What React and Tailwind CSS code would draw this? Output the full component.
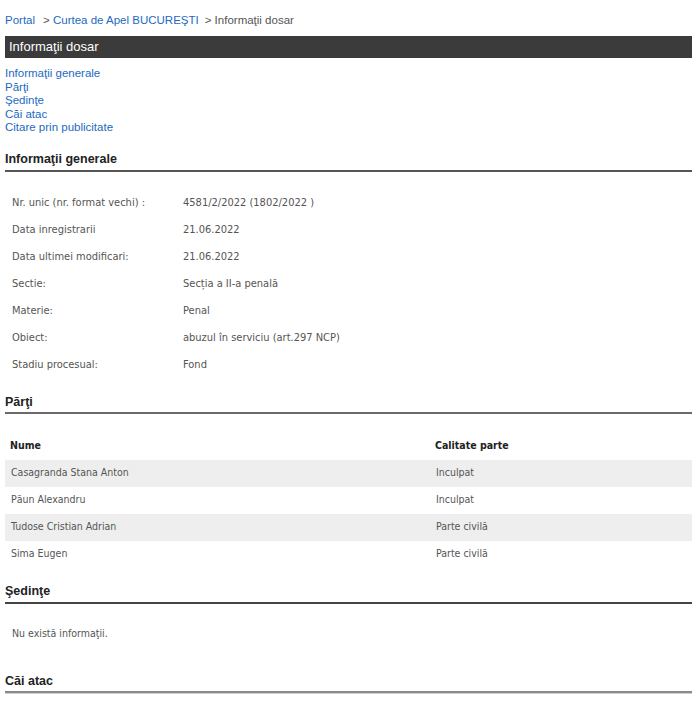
const info = [
  ["Nr. unic (nr. format vechi) :", "4581/2/2022 (1802/2022 )"],
  ["Data inregistrarii", "21.06.2022"],
  ["Data ultimei modificari:", "21.06.2022"],
  ["Sectie:", "Secția a II-a penală"],
  ["Materie:", "Penal"],
  ["Obiect:", "abuzul în serviciu (art.297 NCP)"],
  ["Stadiu procesual:", "Fond"],
];

const parti = [
  ["Casagranda Stana Anton", "Inculpat"],
  ["Păun Alexandru", "Inculpat"],
  ["Tudose Cristian Adrian", "Parte civilă"],
  ["Sima Eugen", "Parte civilă"],
];

const links = [
  "Informaţii generale",
  "Părţi",
  "Şedinţe",
  "Căi atac",
  "Citare prin publicitate",
];

function Heading({ children, className = "" }) {
  return (
    <h2
      className={`border-b-2 text-[12.5px] font-bold leading-[16px] text-[#222] ${className}`}
    >
      {children}
    </h2>
  );
}

export default function App() {
  return (
    <div className="min-h-[705px] w-[700px] bg-white pl-[5px] pr-[8px] font-['Liberation_Sans',Arial,sans-serif]">
      {/* breadcrumb */}
      <div className="pt-[13px] text-[11.5px] leading-[14px] text-[#555]">
        <a className="text-[#1d6ac1]">Portal</a>
        <span className="ml-[8px]">&gt; </span>
        <a className="text-[#1d6ac1]">Curtea de Apel BUCUREŞTI</a>
        <span className="ml-[6px]">&gt; Informaţii dosar</span>
      </div>

      <div className="mt-[9px] h-[22px] bg-[#3b3b3b] pl-[4px] text-[13px] leading-[22px] text-white">
        Informaţii dosar
      </div>

      <div className="mt-[9px] flex flex-col text-[11.5px] leading-[13.5px] text-[#1d6ac1]">
        {links.map((l) => (
          <a key={l}>{l}</a>
        ))}
      </div>

      <Heading className="mt-[16px] pb-[3px] border-[#555]">Informaţii generale</Heading>

      <div className="mt-[18px] font-['DejaVu_Sans_Condensed','DejaVu_Sans',sans-serif] text-[11px] text-[#555]">
        {info.map(([k, v]) => (
          <div key={k} className="flex h-[27px] items-center pl-[7px]">
            <div className="w-[171px]">{k}</div>
            <div>{v}</div>
          </div>
        ))}
      </div>

      <Heading className="mt-[15px] pb-[2px] border-[#6a6a6a]">Părţi</Heading>

      <div className="mt-[18px] font-['DejaVu_Sans_Condensed','DejaVu_Sans',sans-serif] text-[10.5px]">
        <div className="flex h-[28px] items-center pl-[5px] font-bold text-[#222]">
          <div className="w-[425px]">Nume</div>
          <div>Calitate parte</div>
        </div>
        {parti.map(([n, c], i) => (
          <div
            key={n}
            className={`flex h-[27px] items-center pl-[6px] text-[#555] ${
              i % 2 === 0 ? "bg-[#eeeeee]" : ""
            }`}
          >
            <div className="w-[425px]">{n}</div>
            <div>{c}</div>
          </div>
        ))}
      </div>

      <Heading className="mt-[15px] pb-[3px] border-[#444]">Şedinţe</Heading>

      <div className="mt-[17px] flex h-[27px] items-center pl-[7px] font-['DejaVu_Sans_Condensed','DejaVu_Sans',sans-serif] text-[10.5px] text-[#555]">
        Nu există informaţii.
      </div>

      <Heading className="mt-[25px] pb-[2px] border-[#8a8a8a] shadow-[0_1px_0_#d0d0d0]">Căi atac</Heading>
    </div>
  );
}
